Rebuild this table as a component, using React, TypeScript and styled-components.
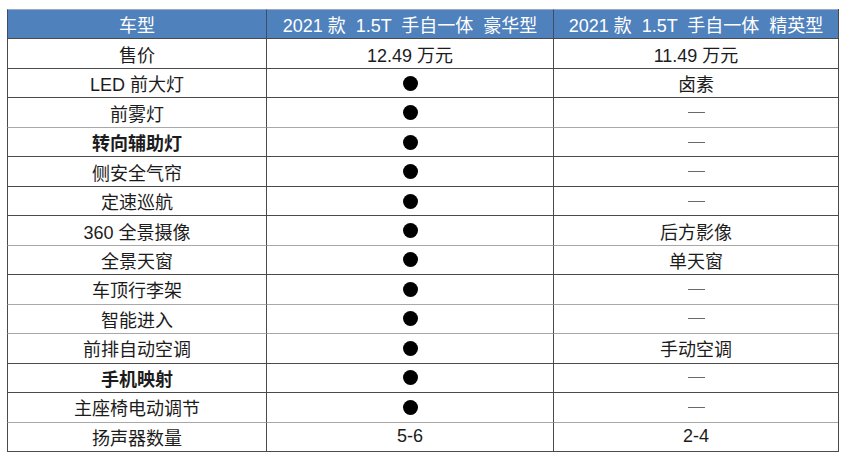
import React from "react";
import styled, { createGlobalStyle } from "styled-components";

const Global = createGlobalStyle`
  html, body { margin: 0; padding: 0; background: #ffffff; }
  body { font-family: "Liberation Sans", "Noto Sans CJK SC", sans-serif; }
`;

const Page = styled.div`
  padding: 9px 0 0 7px;
`;

const Grid = styled.div`
  display: grid;
  grid-template-columns: 259px 287px 285px;
  grid-auto-rows: 29.47px;
  width: 832px;
  box-sizing: border-box;
  border-right: 1px solid #4a4a4a;
  border-bottom: 1px solid #4a4a4a;
`;

const HeadCell = styled.div`
  display: flex;
  align-items: center;
  justify-content: center;
  background: #4f81bd;
  color: #ffffff;
  font-size: 18px;
  border-left: 1px solid #3b4f6b;
  border-top: 1px solid #9aaac2;
  white-space: pre;
  box-sizing: border-box;
`;

const Cell = styled.div<{ $bold?: boolean; $soft?: boolean }>`
  display: flex;
  align-items: center;
  justify-content: center;
  font-size: 18px;
  color: #1c1c1c;
  font-weight: ${(p) => (p.$bold ? 700 : 400)};
  border-left: 1px solid #4a4a4a;
  border-top: 1px solid ${(p) => (p.$soft ? "#a8a8a8" : "#4a4a4a")};
  box-sizing: border-box;
  white-space: pre;
`;

const Dot = styled.span`
  display: inline-block;
  width: 15px;
  height: 15px;
  border-radius: 50%;
  background: #000000;
`;

const Dash = styled.span`
  display: inline-block;
  width: 17px;
  height: 1px;
  background: #6a6a6a;
`;

type Val = string | "dot" | "dash";

const rows: { name: string; a: Val; b: Val; bold?: boolean; soft?: boolean }[] = [
  { name: "售价", a: "12.49 万元", b: "11.49 万元" },
  { name: "LED 前大灯", a: "dot", b: "卤素" },
  { name: "前雾灯", a: "dot", b: "dash" },
  { name: "转向辅助灯", a: "dot", b: "dash", bold: true, soft: true },
  { name: "侧安全气帘", a: "dot", b: "dash" },
  { name: "定速巡航", a: "dot", b: "dash" },
  { name: "360 全景摄像", a: "dot", b: "后方影像" },
  { name: "全景天窗", a: "dot", b: "单天窗", soft: true },
  { name: "车顶行李架", a: "dot", b: "dash" },
  { name: "智能进入", a: "dot", b: "dash", soft: true },
  { name: "前排自动空调", a: "dot", b: "手动空调", soft: true },
  { name: "手机映射", a: "dot", b: "dash", bold: true },
  { name: "主座椅电动调节", a: "dot", b: "dash" },
  { name: "扬声器数量", a: "5-6", b: "2-4", soft: true },
];

function render(v: Val) {
  if (v === "dot") return <Dot />;
  if (v === "dash") return <Dash />;
  return v;
}

export default function App() {
  return (
    <>
      <Global />
      <Page>
        <Grid>
          <HeadCell>车型</HeadCell>
          <HeadCell>{"2021 款  1.5T  手自一体  豪华型"}</HeadCell>
          <HeadCell>{"2021 款  1.5T  手自一体  精英型"}</HeadCell>
          {rows.map((r) => (
            <React.Fragment key={r.name}>
              <Cell $bold={r.bold} $soft={r.soft}>{r.name}</Cell>
              <Cell $soft={r.soft}>{render(r.a)}</Cell>
              <Cell $soft={r.soft}>{render(r.b)}</Cell>
            </React.Fragment>
          ))}
        </Grid>
      </Page>
    </>
  );
}
